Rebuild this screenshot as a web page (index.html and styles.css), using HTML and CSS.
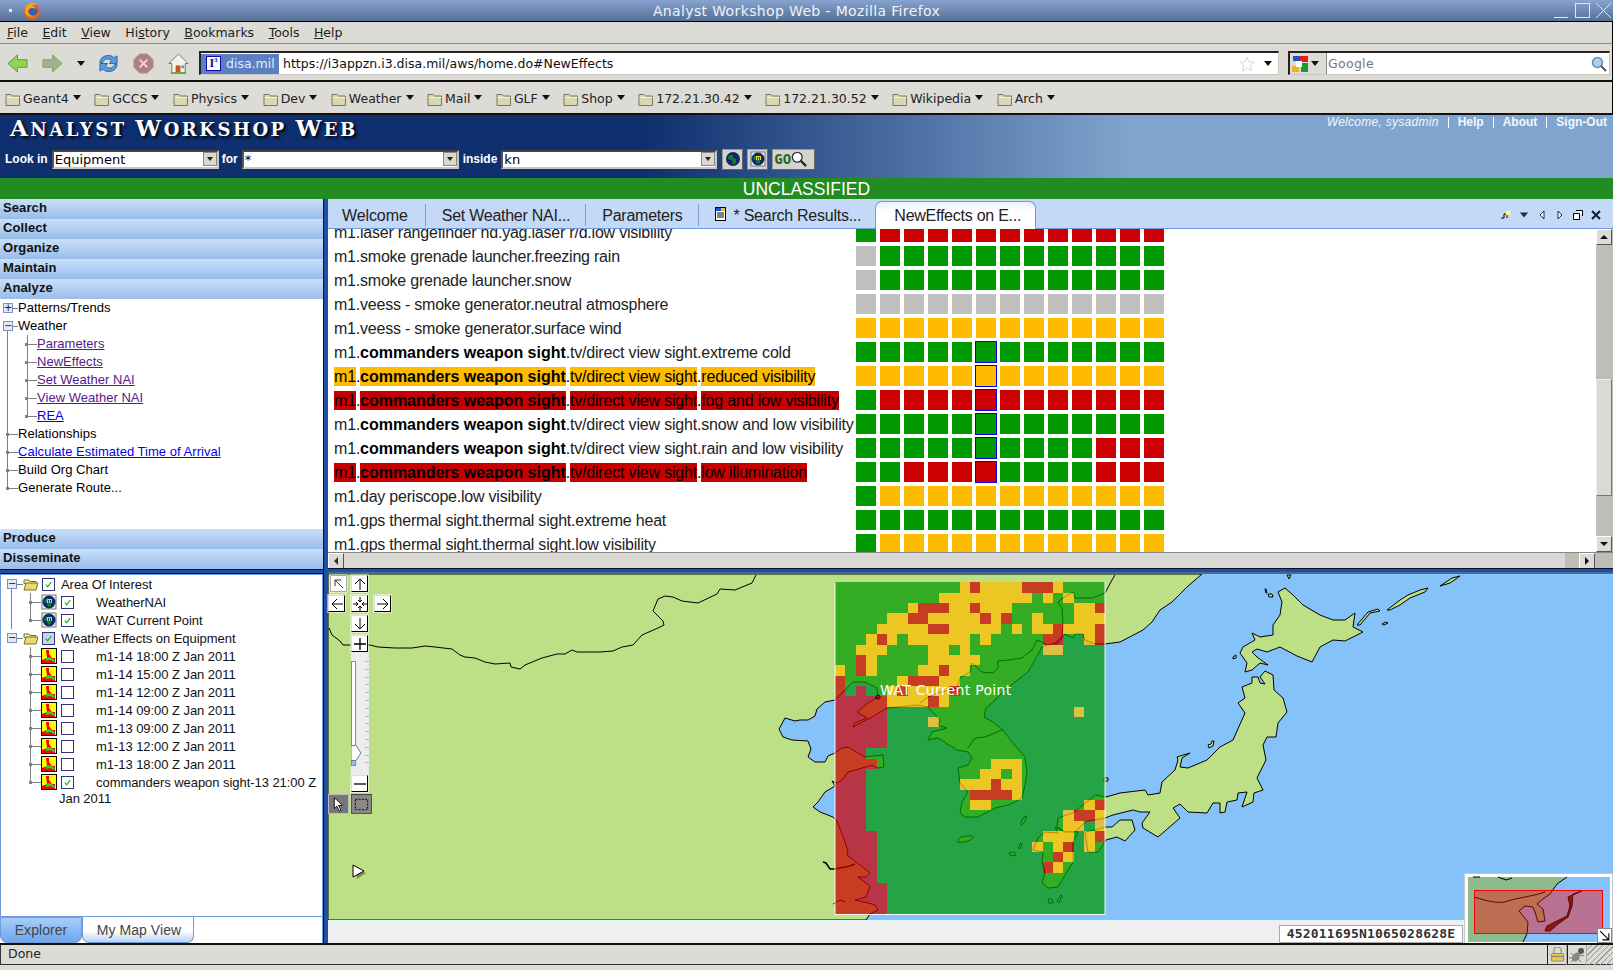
FILE: index.html
```html
<!DOCTYPE html>
<html lang="en">
<head>
<meta charset="utf-8">
<title>Analyst Workshop Web - Mozilla Firefox</title>
<link rel="stylesheet" href="styles.css">
</head>
<body>
<svg class="defs" aria-hidden="true">
  <symbol id="folder" viewBox="0 0 16 16"><path d="M1 3.500h5l1.500 1.500h7v9.500h-13.500z" fill="#d8d8b4" stroke="#77775a"/><path d="M1.500 6.500h13" stroke="#f2f2dc"/></symbol>
  <symbol id="openfolder" viewBox="0 0 16 16"><path d="M1 4h5l1 1.500h6v2h-12z" fill="#f4efa0" stroke="#77771a"/><path d="M1 14l2-7h12l-2 7z" fill="#e8d878" stroke="#77771a"/></symbol>
  <symbol id="layer" viewBox="0 0 16 16"><rect x=".5" y=".5" width="15" height="15" fill="#ff0" stroke="#000"/><path d="M5 2h3v4l3 4h3v5H1v-3l5-2z" fill="#f00"/><path d="M5 10l4-1 5 3-1 2-4-2-4 1z" fill="#2ed12e"/></symbol>
  <symbol id="globe" viewBox="0 0 16 16"><rect x="1" y="1" width="14" height="14" fill="#eee" stroke="#777"/><circle cx="8" cy="8" r="6.500" fill="#0b2a6a"/><path d="M4 5h3v2l3 1v4l-3 1-1-4-3-1z" fill="#1c7a2e"/><path d="M6 5v4h1V6h1v3h1V6h1v3h1V5z" fill="#e4d832"/></symbol>
  <symbol id="check" viewBox="0 0 12 12"><path d="M3 6l2 2.500 4-5" fill="none" stroke="#12b312" stroke-width="1.300"/></symbol>
</svg>

<header class="titlebar">
  <span class="wm-dot"></span>
  <svg class="ffx" viewBox="0 0 18 18"><circle cx="9" cy="9.500" r="8" fill="#e8641a"/><circle cx="10" cy="9" r="4.500" fill="#3a5fa8"/><path d="M3 4c3-4 9-4 12-1-3-1-5 0-6 1 2 0 4 1 4 3-3-2-7-1-8 2 0 3 3 5 6 5-4 2-9-1-9-5 0-2 0-3 1-5z" fill="#f7a51e"/></svg>
  <span class="wintitle">Analyst Workshop Web - Mozilla Firefox</span>
  <span class="winbtns">
    <svg viewBox="0 0 15 15"><path d="M0 14.500h14" stroke="#dfe6f2"/></svg>
    <svg viewBox="0 0 15 15"><rect x=".5" y=".5" width="14" height="14" fill="none" stroke="#dfe6f2"/></svg>
    <svg viewBox="0 0 15 15"><path d="M0 0l15 15M15 0L0 15" stroke="#dfe6f2"/></svg>
  </span>
</header>

<nav class="menubar">
  <span><u>F</u>ile</span><span><u>E</u>dit</span><span><u>V</u>iew</span><span>Hi<u>s</u>tory</span><span><u>B</u>ookmarks</span><span><u>T</u>ools</span><span><u>H</u>elp</span>
</nav>

<div class="navbar">
  <svg class="tool" viewBox="0 0 22 22"><path d="M1 11L11 2v5h10v8H11v5z" fill="#8fd650" stroke="#5aa02c"/></svg>
  <svg class="tool t-fwd" viewBox="0 0 22 22"><path d="M21 11L11 2v5H1v8h10v5z" fill="#9cb48c" stroke="#86a070"/></svg>
  <span class="caret t-drop"></span>
  <svg class="tool t-rel" viewBox="0 0 22 22"><path d="M2 10c0-7 10-10 15-5l3-2v8h-8l2-3c-3-3-8-2-9 2zM20 12c0 7-10 10-15 5l-3 2v-8h8l-2 3c3 3 8 2 9-2z" fill="#5c9ad8" stroke="#2d6aa8"/></svg>
  <svg class="tool t-stop" viewBox="0 0 22 22"><path d="M7 1h8l6 6v8l-6 6H7l-6-6V7z" fill="#b08080" stroke="#979797"/><path d="M7 7l8 8M15 7l-8 8" stroke="#e8d8d8" stroke-width="2"/></svg>
  <svg class="tool t-home" viewBox="0 0 22 22"><path d="M11 1L1 11h3v10h14V11h3z" fill="#f4f2ea" stroke="#77756e"/><path d="M8 13h5v8H8z" fill="#c9551e"/><path d="M14 13h3v3h-3z" fill="#6a92c4"/><path d="M3 21h16" stroke="#6aa84a" stroke-width="2"/></svg>
  <div class="urlbar">
    <span class="identity"><span class="i3">I<sup>3</sup></span><span>disa.mil</span></span>
    <span class="url">https://i3appzn.i3.disa.mil/aws/home.do#NewEffects</span>
    <svg class="star" viewBox="0 0 16 16"><path d="M8 1l2 5h5l-4 3.500 1.500 5.500L8 12l-4.500 3L5 9.500 1 6h5z" fill="#fff" stroke="#d8d8d8"/></svg>
    <span class="caret"></span>
  </div>
  <div class="searchbar">
    <span class="engine">
      <svg class="gicon" viewBox="0 0 16 16"><path d="M1 0h7v5H1z" fill="#1a55c8"/><path d="M8 0h8v6H8z" fill="#e0201a"/><path d="M0 10h7v6H0z" fill="#f0b020"/><path d="M9 7h7v9H9z" fill="#1a9a2e"/><path d="M4 5h6v6H4z" fill="#fff"/></svg>
      <span class="caret"></span>
    </span>
    <span class="gtext">Google</span>
    <svg class="mag" viewBox="0 0 16 16"><circle cx="6.500" cy="6.500" r="5" fill="#a8d0f0" stroke="#6a8aa8" stroke-width="1.500"/><path d="M10 10l5 5" stroke="#555" stroke-width="2"/></svg>
  </div>
</div>

<div class="bookmarks">
  <span class="bm"><svg class="fold"><use href="#folder"/></svg>Geant4<span class="caret"></span></span>
  <span class="bm"><svg class="fold"><use href="#folder"/></svg>GCCS<span class="caret"></span></span>
  <span class="bm"><svg class="fold"><use href="#folder"/></svg>Physics<span class="caret"></span></span>
  <span class="bm"><svg class="fold"><use href="#folder"/></svg>Dev<span class="caret"></span></span>
  <span class="bm"><svg class="fold"><use href="#folder"/></svg>Weather<span class="caret"></span></span>
  <span class="bm"><svg class="fold"><use href="#folder"/></svg>Mail<span class="caret"></span></span>
  <span class="bm"><svg class="fold"><use href="#folder"/></svg>GLF<span class="caret"></span></span>
  <span class="bm"><svg class="fold"><use href="#folder"/></svg>Shop<span class="caret"></span></span>
  <span class="bm"><svg class="fold"><use href="#folder"/></svg>172.21.30.42<span class="caret"></span></span>
  <span class="bm"><svg class="fold"><use href="#folder"/></svg>172.21.30.52<span class="caret"></span></span>
  <span class="bm"><svg class="fold"><use href="#folder"/></svg>Wikipedia<span class="caret"></span></span>
  <span class="bm"><svg class="fold"><use href="#folder"/></svg>Arch<span class="caret"></span></span>
</div>

<section class="apphead">
  <div class="headtop">
    <h1 class="brand"><span>A</span>nalyst <span>W</span>orkshop <span>W</span>eb</h1>
    <div class="userlinks"><em>Welcome, sysadmin</em><i class="pipe"></i><b>Help</b><i class="pipe"></i><b>About</b><i class="pipe"></i><b>Sign-Out</b></div>
  </div>
  <div class="lookin">
    <label>Look in</label><span class="sel sel-a"><span>Equipment</span><i class="selbtn"></i></span>
    <label>for</label><span class="sel sel-b"><span>*</span><i class="selbtn"></i></span>
    <label>inside</label><span class="sel sel-c"><span>kn</span><i class="selbtn"></i></span>
    <span class="hbtn"><svg viewBox="0 0 16 16"><circle cx="8" cy="8" r="7" fill="#0b2a6a"/><path d="M4 4h4v3l3 1v4l-3 2-1-5-4-1z" fill="#1c7a2e"/></svg></span>
    <span class="hbtn"><svg><use href="#globe"/></svg></span>
    <span class="hbtn gobtn"><span>GO</span><svg viewBox="0 0 18 18"><circle cx="7" cy="7" r="5.500" fill="#fff" stroke="#333" stroke-width="1.500"/><path d="M11 11l6 6" stroke="#222" stroke-width="2.500"/></svg></span>
  </div>
</section>

<div class="classbar">UNCLASSIFIED</div>

<main class="workspace">
  <aside class="leftcol">
    <div class="accordion">
      <div class="acc">Search</div>
      <div class="acc">Collect</div>
      <div class="acc">Organize</div>
      <div class="acc">Maintain</div>
      <div class="acc">Analyze</div>
      <div class="navtree">
        <div class="tr t-top"><span class="exp">+</span>Patterns/Trends</div>
        <div class="tr t-open"><span class="exp">&minus;</span>Weather</div>
        <div class="tr t2"><a class="vis">Parameters</a></div>
        <div class="tr t2"><a class="vis">NewEffects</a></div>
        <div class="tr t2"><a class="vis">Set Weather NAI</a></div>
        <div class="tr t2"><a class="vis">View Weather NAI</a></div>
        <div class="tr t2 t2-last"><a class="lnk">REA</a></div>
        <div class="tr t1">Relationships</div>
        <div class="tr t1"><a class="lnk">Calculate Estimated Time of Arrival</a></div>
        <div class="tr t1">Build Org Chart</div>
        <div class="tr t1 t1-last">Generate Route...</div>
      </div>
      <div class="acc">Produce</div>
      <div class="acc">Disseminate</div>
    </div>
    <div class="hsplit"></div>
    <div class="layers">
      <div class="ln l-group l-g1"><span class="exp2">&minus;</span><svg class="ico"><use href="#openfolder"/></svg><span class="cb"><svg><use href="#check"/></svg></span><span class="lt">Area Of Interest</span></div>
      <div class="ln l-item l-i1"><svg class="ico"><use href="#globe"/></svg><span class="cb"><svg><use href="#check"/></svg></span><span class="lt2">WeatherNAI</span></div>
      <div class="ln l-item l-i1 l-i1-last"><svg class="ico"><use href="#globe"/></svg><span class="cb"><svg><use href="#check"/></svg></span><span class="lt2">WAT Current Point</span></div>
      <div class="ln l-group"><span class="exp2">&minus;</span><svg class="ico"><use href="#openfolder"/></svg><span class="cb cb-tint"><svg><use href="#check"/></svg></span><span class="lt">Weather Effects on Equipment</span></div>
      <div class="ln l-item"><svg class="ico"><use href="#layer"/></svg><span class="cb"></span><span class="lt2">m1-14 18:00 Z Jan 2011</span></div>
      <div class="ln l-item"><svg class="ico"><use href="#layer"/></svg><span class="cb"></span><span class="lt2">m1-14 15:00 Z Jan 2011</span></div>
      <div class="ln l-item"><svg class="ico"><use href="#layer"/></svg><span class="cb"></span><span class="lt2">m1-14 12:00 Z Jan 2011</span></div>
      <div class="ln l-item"><svg class="ico"><use href="#layer"/></svg><span class="cb"></span><span class="lt2">m1-14 09:00 Z Jan 2011</span></div>
      <div class="ln l-item"><svg class="ico"><use href="#layer"/></svg><span class="cb"></span><span class="lt2">m1-13 09:00 Z Jan 2011</span></div>
      <div class="ln l-item"><svg class="ico"><use href="#layer"/></svg><span class="cb"></span><span class="lt2">m1-13 12:00 Z Jan 2011</span></div>
      <div class="ln l-item"><svg class="ico"><use href="#layer"/></svg><span class="cb"></span><span class="lt2">m1-13 18:00 Z Jan 2011</span></div>
      <div class="ln l-item l-last"><svg class="ico"><use href="#layer"/></svg><span class="cb"><svg><use href="#check"/></svg></span><span class="lt2">commanders weapon sight-13 21:00 Z</span></div>
      <div class="lwrap">Jan 2011</div>
    </div>
    <div class="lefttabs">
      <span class="ltab ltab-on">Explorer</span>
      <span class="ltab ltab-off">My Map View</span>
    </div>
  </aside>

  <div class="vsplit"></div>

  <div class="rightcol">
    <div class="tabbar">
      <span class="tab tab-first">Welcome</span>
      <span class="tab">Set Weather NAI...</span>
      <span class="tab">Parameters</span>
      <span class="tab tab-ic"><svg viewBox="0 0 11 14"><rect x=".5" y=".5" width="10" height="13" fill="#fff" stroke="#000"/><path d="M1 1h5v3H1z" fill="#1a55c8"/><path d="M6 1h4v3H6z" fill="#f0c020"/><path d="M2 6h7M2 8h7M2 10h7" stroke="#000"/></svg>* Search Results...</span>
      <span class="tab-on">NewEffects on E...</span>
      <span class="tabtools">
        <svg viewBox="0 0 10 10"><path d="M0 8h3V4h3v4" fill="none" stroke="#000"/><rect x="5" y="1" width="4" height="4" fill="#ff6"/></svg>
        <svg viewBox="0 0 12 10"><path d="M1 2h10L6 8z" fill="#222a44"/></svg>
        <svg viewBox="0 0 10 10"><path d="M7 1L3 5l4 4z" fill="#fff" stroke="#222a44"/></svg>
        <svg viewBox="0 0 10 10"><path d="M3 1l4 4-4 4z" fill="#fff" stroke="#222a44"/></svg>
        <svg viewBox="0 0 10 10"><path d="M3 .5h6.500V6M.5 3.500h6v6h-6z" fill="#fff" stroke="#000"/></svg>
        <svg viewBox="0 0 10 10"><path d="M1 1l8 8M9 1L1 9" stroke="#111a33" stroke-width="2"/></svg>
      </span>
    </div>

    <div class="effects">
      <div class="rows">
        <div class="row"><div class="lab">m1.laser rangefinder nd.yag.laser r/d.low visibility</div><div class="cells"><i class="g"></i><i class="r"></i><i class="r"></i><i class="r"></i><i class="r"></i><i class="r"></i><i class="r"></i><i class="r"></i><i class="r"></i><i class="r"></i><i class="r"></i><i class="r"></i><i class="r"></i></div></div>
        <div class="row"><div class="lab">m1.smoke grenade launcher.freezing rain</div><div class="cells"><i class="n"></i><i class="g"></i><i class="g"></i><i class="g"></i><i class="g"></i><i class="g"></i><i class="g"></i><i class="g"></i><i class="g"></i><i class="g"></i><i class="g"></i><i class="g"></i><i class="g"></i></div></div>
        <div class="row"><div class="lab">m1.smoke grenade launcher.snow</div><div class="cells"><i class="n"></i><i class="g"></i><i class="g"></i><i class="g"></i><i class="g"></i><i class="g"></i><i class="g"></i><i class="g"></i><i class="g"></i><i class="g"></i><i class="g"></i><i class="g"></i><i class="g"></i></div></div>
        <div class="row"><div class="lab">m1.veess - smoke generator.neutral atmosphere</div><div class="cells"><i class="n"></i><i class="n"></i><i class="n"></i><i class="n"></i><i class="n"></i><i class="n"></i><i class="n"></i><i class="n"></i><i class="n"></i><i class="n"></i><i class="n"></i><i class="n"></i><i class="n"></i></div></div>
        <div class="row"><div class="lab">m1.veess - smoke generator.surface wind</div><div class="cells"><i class="o"></i><i class="o"></i><i class="o"></i><i class="o"></i><i class="o"></i><i class="o"></i><i class="o"></i><i class="o"></i><i class="o"></i><i class="o"></i><i class="o"></i><i class="o"></i><i class="o"></i></div></div>
        <div class="row"><div class="lab"><span>m1</span>.<b>commanders weapon sight</b>.<span>tv/direct view sight</span>.<span>extreme cold</span></div><div class="cells"><i class="g"></i><i class="g"></i><i class="g"></i><i class="g"></i><i class="g"></i><i class="g s"></i><i class="g"></i><i class="g"></i><i class="g"></i><i class="g"></i><i class="g"></i><i class="g"></i><i class="g"></i></div></div>
        <div class="row hl-o"><div class="lab"><span>m1</span>.<b>commanders weapon sight</b>.<span>tv/direct view sight</span>.<span>reduced visibility</span></div><div class="cells"><i class="o"></i><i class="o"></i><i class="o"></i><i class="o"></i><i class="o"></i><i class="o s"></i><i class="o"></i><i class="o"></i><i class="o"></i><i class="o"></i><i class="o"></i><i class="o"></i><i class="o"></i></div></div>
        <div class="row hl-r"><div class="lab"><span>m1</span>.<b>commanders weapon sight</b>.<span>tv/direct view sight</span>.<span>fog and low visibility</span></div><div class="cells"><i class="g"></i><i class="r"></i><i class="r"></i><i class="r"></i><i class="r"></i><i class="r s"></i><i class="r"></i><i class="r"></i><i class="r"></i><i class="r"></i><i class="r"></i><i class="r"></i><i class="r"></i></div></div>
        <div class="row"><div class="lab"><span>m1</span>.<b>commanders weapon sight</b>.<span>tv/direct view sight</span>.<span>snow and low visibility</span></div><div class="cells"><i class="g"></i><i class="g"></i><i class="g"></i><i class="g"></i><i class="g"></i><i class="g s"></i><i class="g"></i><i class="g"></i><i class="g"></i><i class="g"></i><i class="g"></i><i class="g"></i><i class="g"></i></div></div>
        <div class="row"><div class="lab"><span>m1</span>.<b>commanders weapon sight</b>.<span>tv/direct view sight</span>.<span>rain and low visibility</span></div><div class="cells"><i class="g"></i><i class="g"></i><i class="g"></i><i class="g"></i><i class="g"></i><i class="g s"></i><i class="g"></i><i class="g"></i><i class="g"></i><i class="g"></i><i class="r"></i><i class="r"></i><i class="r"></i></div></div>
        <div class="row hl-r"><div class="lab"><span>m1</span>.<b>commanders weapon sight</b>.<span>tv/direct view sight</span>.<span>low illumination</span></div><div class="cells"><i class="g"></i><i class="g"></i><i class="r"></i><i class="r"></i><i class="r"></i><i class="r s"></i><i class="g"></i><i class="g"></i><i class="g"></i><i class="g"></i><i class="r"></i><i class="r"></i><i class="r"></i></div></div>
        <div class="row"><div class="lab">m1.day periscope.low visibility</div><div class="cells"><i class="g"></i><i class="o"></i><i class="o"></i><i class="o"></i><i class="o"></i><i class="o"></i><i class="o"></i><i class="o"></i><i class="o"></i><i class="o"></i><i class="o"></i><i class="o"></i><i class="o"></i></div></div>
        <div class="row"><div class="lab">m1.gps thermal sight.thermal sight.extreme heat</div><div class="cells"><i class="g"></i><i class="g"></i><i class="g"></i><i class="g"></i><i class="g"></i><i class="g"></i><i class="g"></i><i class="g"></i><i class="g"></i><i class="g"></i><i class="g"></i><i class="g"></i><i class="g"></i></div></div>
        <div class="row"><div class="lab">m1.gps thermal sight.thermal sight.low visibility</div><div class="cells"><i class="g"></i><i class="o"></i><i class="o"></i><i class="o"></i><i class="o"></i><i class="o"></i><i class="o"></i><i class="o"></i><i class="o"></i><i class="o"></i><i class="o"></i><i class="o"></i><i class="o"></i></div></div>
      </div>
      <div class="vscroll">
        <span class="sbtn"><i class="up"></i></span>
        <span class="vtrack"><span class="vthumb"></span></span>
        <span class="sbtn"><i class="down"></i></span>
      </div>
    </div>

    <div class="hscroll">
      <span class="sbtn"><i class="left"></i></span>
      <span class="hthumb"></span>
      <span class="htrack"></span>
      <span class="sbtn"><i class="right"></i></span>
    </div>

    <div class="hsplit2"></div>

    <div class="mapwrap">
      <svg class="map" viewBox="328 574 1285 346" width="1285" height="346">
        <rect x="328" y="574" width="1285" height="346" fill="#85c2f9"/>
        <g fill="#bddf85" stroke="#000" stroke-width="1" stroke-linejoin="round">
          <path d="M1202 574L1187 587 1172 602 1160 610 1152 622 1143 630 1120 642 1105 644 1095 644 1085 640 1083 634 1075 634 1073 638 1065 634 1058 643 1047 645 1042 647 1032 665 1028 672 1015 682 1005 690 992 703 986 708 984 717 993 722 1003 730 1012 742 1025 757 1027 772 1025 785 1022 798 1015 802 1008 805 995 808 978 817 965 817 960 813 962 802 968 792 960 783 958 768 968 765 972 758 968 752 957 750 938 738 928 740 932 732 947 728 938 725 940 720 928 707 918 705 898 707 887 708 872 717 853 727 855 723 867 718 857 712 868 703 878 697 877 688 865 682 853 682 845 690 835 700 825 702 817 709 815 716 808 720 800 720 795 721 785 718 779 729 783 737 792 740 808 741 811 749 808 757 815 762 825 762 828 756 835 753 842 748 848 747 858 753 865 757 883 755 884 767 877 768 872 765 862 768 848 772 842 780 837 783 832 781 835 786 825 792 818 802 813 807 820 812 833 817 837 821 845 842 848 852 847 855 860 865 870 873 866 877 858 877 870 886 866 897 855 900 868 903 875 905 878 910 870 914 866 920 328 920 328 574z"/>
          <path d="M1278 592L1285 588 1293 595 1303 605 1320 615 1333 620 1345 620 1355 613 1353 627 1363 632 1353 637 1345 641 1333 640 1320 647 1312 662 1297 656 1280 647 1267 652 1257 649 1252 652 1257 657 1268 665 1260 663 1252 670 1245 672 1247 663 1240 653 1243 647 1255 640 1252 633 1260 637 1273 635 1273 625 1280 615 1282 602z"/>
          <path d="M1252 677L1258 677 1260 683 1265 684 1260 677 1265 671 1273 675 1274 690 1283 698 1287 712 1278 723 1276 737 1267 737 1263 745 1266 760 1257 778 1263 790 1254 793 1253 802 1242 807 1247 792 1238 793 1237 800 1227 802 1225 812 1220 813 1220 803 1213 803 1207 813 1188 812 1180 804 1173 808 1180 818 1158 837 1143 828 1142 823 1150 812 1140 812 1133 810 1113 815 1105 818 1093 820 1085 822 1075 832 1065 832 1057 827 1058 818 1073 813 1083 805 1095 795 1106 797 1120 793 1145 790 1148 795 1160 793 1162 782 1175 770 1178 760 1177 757 1190 753 1182 758 1180 767 1188 768 1207 760 1220 747 1233 740 1245 713 1238 703 1245 698 1242 687 1252 683z"/>
          <path d="M1085 832L1095 830 1106 827 1112 827 1120 820 1132 820 1135 830 1125 841 1117 837 1106 840 1098 852 1088 852z"/>
          <path d="M1055 827L1058 833 1045 832 1038 838 1033 850 1043 852 1042 862 1045 872 1042 883 1048 888 1058 887 1065 875 1073 862 1073 842 1078 832 1065 832z"/>
          <path d="M958 839c3-3 12-4 15-2 1 3-10 6-15 5z"/>
          <path d="M1021 822l3-5 3-1-3 7-3 2z"/>
          <path d="M1009 853l5-1 2 3-5 1zM1018 848l3-5 1 1-2 5zM1048 899l4 0 1 4-4 0zM1057 901l4-6 1 1-3 7z"/>
          <path d="M1440 586L1452 578 1460 576 1450 583z"/>
          <path d="M1387 610L1400 600 1408 595 1420 590 1428 588 1425 592 1410 598 1400 605 1390 610zM1357 625L1368 612 1378 609 1380 611 1370 613 1360 625zM1382 624l4-2 2 1-4 2zM1268 594l4 0 1 3-4 0zM1265 589l1 0 1 4-1 0zM1287 575l4 0-2 4zM1233 657l3-2 0 3-3 1zM1208 745l3-1 1-3 2 0-1 5-4 2zM1104 778l4 0 0 3-4 0z"/>
        </g>
        <g fill="none" stroke="#000" stroke-width="1">
          <path d="M329 628L332 635 340 641 343 645 349 645 370 645 378 647 395 648 412 648 425 646 435 647 452 649 460 655 465 657 475 658 485 662 495 664 510 663 511 667 520 669 525 665 542 658 557 654 565 654 572 650 577 652 600 652 613 651 622 647 633 645 642 635 658 628 664 625 663 621 653 611 658 599 665 596 673 597 682 601 698 603 717 594 720 589 735 590 752 583 756 575"/>
          <path d="M1047 645L1042 642 1037 640 1032 650 1022 658 1008 660 998 661 998 668 993 673 982 672 972 663 970 672 960 678 957 688 938 693 928 697 920 703"/>
          <path d="M968 748L975 738 985 737 1002 730"/>
          <path d="M1055 643L1062 637 1063 625 1062 608 1058 602 1063 598 1073 592 1075 598 1092 598 1105 593 1112 580 1115 575"/>
          <path d="M823 862L826 863 830 869 835 869 850 866 855 864" stroke-width="1.500"/>
          <path d="M833 904L840 900 845 902"/>
        </g>
        <g class="overlay" transform="translate(835 582.300) scale(10.385 10.370)" opacity=".72" shape-rendering="crispEdges">
          <rect width="26" height="32" fill="#090"/>
          <path fill="#ffbf00" d="M12 0h1v1h-1zM14 0h4v1h-4zM21 0h1v1h-1zM10 1h9v1h-9zM20 1h1v1h-1zM22 1h1v1h-1zM7 2h1v1H7zM11 2h2v1h-2zM14 2h3v1h-3zM23 2h2v1h-2zM5 3h2v1H5zM9 3h5v1H9zM15 3h1v1h-1zM19 3h1v1h-1zM23 3h3v1h-3zM4 4h5v1H4zM11 4h5v1h-5zM17 4h1v1h-1zM19 4h2v1h-2zM22 4h3v1h-3zM3 5h1v1H3zM5 5h1v1H5zM7 5h6v1H7zM14 5h1v1h-1zM24 5h1v1h-1zM2 6h3v1H2zM9 6h2v1H9zM12 6h1v1h-1zM20 6h2v1h-2zM3 7h1v1H3zM9 7h5v1H9zM0 8h1v1H0zM3 8h1v1H3zM8 8h2v1H8zM11 8h2v1h-2zM6 9h1v1H6zM10 9h2v1h-2zM5 10h1v1H5zM7 10h4v1H7zM5 11h4v1H5zM10 11h1v1h-1zM23 12h1v1h-1zM9 13h1v1H9zM15 17h3v1h-3zM14 18h2v1h-2zM17 18h1v1h-1zM12 19h3v1h-3zM16 19h2v1h-2zM17 20h1v1h-1zM13 21h2v1h-2zM24 21h1v1h-1zM22 22h1v1h-1zM25 22h1v1h-1zM22 23h2v1h-2zM25 23h1v1h-1zM20 24h3v1h-3zM24 24h1v1h-1zM19 25h1v1h-1zM21 25h1v1h-1zM24 25h1v1h-1zM22 26h1v1h-1zM21 27h1v1h-1z"/>
          <path fill="#c00" d="M13 0h1v1h-1zM18 0h3v1h-3zM8 2h3v1H8zM13 2h1v1h-1zM25 2h1v1h-1zM7 3h2v1H7zM14 3h1v1h-1zM16 3h1v1h-1zM9 4h2v1H9zM21 4h1v1h-1zM25 4h1v1h-1zM4 5h1v1H4zM20 5h2v1h-2zM25 5h1v1h-1zM2 7h1v1H2zM2 8h1v1H2zM10 8h1v1h-1zM0 9h1v1H0zM7 9h3v1H7zM0 10h1v1H0zM2 10h1v1H2zM6 10h1v1H6zM11 10h1v1h-1zM0 11h5v1H0zM9 11h1v1H9zM0 12h5v4H0zM0 16h3v1H0zM0 17h4v1H0zM0 18h3v6H0zM15 19h1v1h-1zM13 20h4v1h-4zM25 21h1v1h-1zM23 22h2v1h-2zM0 24h4v5H0zM25 24h1v1h-1zM22 25h1v1h-1zM21 26h1v1h-1zM20 27h1v1h-1zM0 29h5v3H0z"/>
        </g>
        <path d="M835 582.500V914.500H1105V582" fill="none" stroke="#fff" stroke-opacity=".9"/>
        <circle cx="878" cy="697" r="2" fill="none" stroke="#000"/>
        <text class="maplabel" x="880" y="695">WAT Current Point</text>
        <path d="M354 865l11 6-9 6z" fill="#4a5a2a" transform="translate(1 2)" opacity=".6"/>
        <path d="M353 865l11 6-11 6z" fill="#fff" stroke="#000"/>
      </svg>

      <div class="mapctl">
        <span class="mb mb-nw"><svg viewBox="0 0 14 14"><path d="M3 3h6M3 3v6M3 3l8 8" fill="none" stroke="#333"/></svg></span>
        <span class="mb"><svg viewBox="0 0 14 14"><path d="M7 13V2M2 7l5-5 5 5" fill="none" stroke="#000"/></svg></span>
        <span></span>
        <span class="mb"><svg viewBox="0 0 14 14"><path d="M13 7H2M7 2L2 7l5 5" fill="none" stroke="#000"/></svg></span>
        <span class="mb"><svg viewBox="0 0 14 14"><path d="M7 0v5M5 3l2 2 2-2M7 14V9M5 11l2-2 2 2M0 7h5M3 5l2 2-2 2M14 7H9M11 5L9 7l2 2" fill="none" stroke="#000"/></svg></span>
        <span class="mb"><svg viewBox="0 0 14 14"><path d="M1 7h11M7 2l5 5-5 5" fill="none" stroke="#000"/></svg></span>
        <span></span>
        <span class="mb"><svg viewBox="0 0 14 14"><path d="M7 1v11M2 7l5 5 5-5" fill="none" stroke="#000"/></svg></span>
        <span></span>
        <span></span>
        <span class="mb"><svg viewBox="0 0 14 14"><path d="M7 1v12M1 7h12" fill="none" stroke="#000" stroke-width="1.300"/></svg></span>
        <span></span>
        <span></span>
        <span class="zoomrail"><span class="ztrack"><span class="zfill"></span></span><svg class="zthumb" viewBox="0 0 11 16"><path d="M0 .5h5l5 7.500-5 7.500H0z" fill="#fff" stroke="#6a7a9a"/></svg><span class="zticks"></span></span>
        <span></span>
        <span></span>
        <span class="mb"><svg viewBox="0 0 14 14"><path d="M1 7h12" fill="none" stroke="#000" stroke-width="1.300"/></svg></span>
        <span></span>
        <span class="tb tb-a"><svg viewBox="0 0 14 18"><path d="M2 1v13l3-3 3 6 2-1-3-6h5z" fill="#fff" stroke="#000"/></svg></span>
        <span class="tb"><svg viewBox="0 0 16 14"><rect x="1.500" y="1.500" width="13" height="11" fill="none" stroke="#000" stroke-dasharray="2 1.500"/></svg></span>
      </div>

      <div class="coordstrip"><span class="coord">452011695N1065028628E</span></div>

      <div class="mini">
        <svg viewBox="1465 875 147 68" width="147" height="68">
          <rect x="1468" y="878" width="142" height="65" fill="#85c2f9"/>
          <path d="M1468 878H1567L1557 885 1550 895 1543 900 1537 905 1543 910 1545 922 1538 923 1535 913 1533 908 1525 907 1519 912 1528 923 1527 935 1523 943H1468z" fill="#8dbb8c"/>
          <path d="M1567 878L1557 885 1550 895 1543 900 1537 905 1543 910 1545 922 1538 923 1535 913 1533 908 1525 907 1519 912 1528 923 1527 935 1523 943" fill="none" stroke="#000"/>
          <path d="M1573 895L1582 892 1568 898 1570 907 1567 917 1557 922 1547 927 1545 932 1550 932 1558 925 1568 918 1572 907z" fill="#3a2a20" stroke="#000"/>
          <path d="M1474 898C1490 903 1500 905 1508 902S1530 898 1545 893M1473 878H1480M1498 878L1506 881 1512 879" stroke="#000" fill="none"/>
          <rect x="1474.500" y="891.500" width="128" height="43" fill="#f00" fill-opacity=".41" stroke="#f00"/>
        </svg>
        <span class="minibtn"><svg viewBox="0 0 12 12"><path d="M2 2l8 8M10 4v6H4" fill="none" stroke="#000"/></svg></span>
      </div>
    </div>
  </div>
</main>

<footer class="statusbar">
  <div class="statusline">
    <span class="done">Done</span>
    <span class="st-ic"><svg viewBox="0 0 16 16"><path d="M4 7V4a4 4 0 0 1 8 0v3" fill="none" stroke="#999" stroke-width="1.500"/><rect x="1.500" y="7" width="13" height="8" rx="1" fill="#e6c84a" stroke="#888"/><path d="M2 10h12" stroke="#777"/></svg></span>
    <span class="st-ic st-bug"><svg viewBox="0 0 18 16"><ellipse cx="8" cy="10" rx="3.500" ry="5" fill="#888" transform="rotate(35 8 10)"/><circle cx="13" cy="4" r="3" fill="#555"/><path d="M3 6l3 3M1 11l4 0M3 15l3-3M10 12l3 3M12 8l4 1" stroke="#777"/></svg></span>
    <span class="grip"></span>
  </div>
  <div class="taskstrip"></div>
</footer>
</body>
</html>
```

FILE: styles.css
```css
* { box-sizing: border-box; }
html, body { margin: 0; padding: 0; }
body { width: 1613px; height: 970px; overflow: hidden; display: flex; flex-direction: column; font-family: "Liberation Sans", Arial, sans-serif; background: #dcdbd6; }
.defs { width: 0; height: 0; position: absolute; }
svg { display: block; flex: none; }
u { text-decoration: underline; }

/* window title */
.titlebar { height: 21px; flex: none; background: linear-gradient(#87a3cf, #566f93); display: flex; align-items: center; justify-content: center; padding-right: 20px; position: relative; color: #eef2f8; font: 14px "DejaVu Sans", sans-serif; letter-spacing: .36px; }
.wm-dot { position: absolute; left: 9px; top: 9px; width: 3px; height: 3px; background: #e8eef6; }
.ffx { position: absolute; left: 23px; top: 2px; width: 18px; height: 18px; }
.winbtns { position: absolute; right: 2px; top: 3px; display: flex; gap: 6px; }
.winbtns svg { width: 15px; height: 15px; }

/* browser bars */
.menubar { height: 23px; flex: none; border-top: 1px solid #000; border-bottom: 1px solid #8a8983; border-right: 1px solid #000; display: flex; align-items: center; padding-left: 7px; gap: 14.500px; font: 12.500px "DejaVu Sans", sans-serif; color: #222; background: #dcdbd6; }
.navbar { height: 38px; flex: none; border-bottom: 2px solid #111; border-right: 1px solid #000; display: flex; align-items: center; padding: 2px 0 0 7px; background: #dcdbd6; }
.tool { width: 21px; height: 21px; }
.t-fwd { margin-left: 14px; }
.t-drop { margin: 0 13px 0 14px; }
.t-stop { margin-left: 14px; }
.t-home { margin-left: 14px; margin-right: 10px; }
.caret { display: inline-block; flex: none; width: 0; height: 0; border-left: 4.500px solid transparent; border-right: 4.500px solid transparent; border-top: 5px solid #111; }
.urlbar { width: 1080px; height: 24px; flex: none; background: #fff; border: 1px solid #c9c8c2; border-top: 2px solid #222; border-left: 2px solid #222; display: flex; align-items: center; font: 12.500px "DejaVu Sans", sans-serif; color: #111; padding-right: 6px; }
.identity { width: 78px; height: 20px; background: #5b7fc0; color: #e4ebf6; display: flex; align-items: center; gap: 5px; padding-left: 5px; flex: none; }
.i3 { width: 15px; height: 15px; background: #fff; border: 1px solid #0a0aa8; color: #0a0aa8; font: bold 12px/13px "Liberation Serif", serif; text-align: center; flex: none; }
.i3 sup { font-size: 7px; line-height: 0; }
.url { margin-left: 4px; flex: 1; }
.star { width: 16px; height: 16px; margin-right: 9px; }
.searchbar { width: 322px; height: 24px; margin-left: 9px; flex: none; background: #fff; border: 1px solid #c9c8c2; border-top: 2px solid #222; border-left: 2px solid #222; display: flex; align-items: center; font: 12.500px "DejaVu Sans", sans-serif; color: #777; }
.engine { width: 37px; height: 21px; background: #dcdbd6; border-right: 1px solid #8a8983; display: flex; align-items: center; gap: 3px; padding-left: 2px; flex: none; }
.gicon { width: 16px; height: 16px; }
.gtext { margin-left: 1px; flex: 1; letter-spacing: .3px; }
.mag { width: 16px; height: 16px; margin-right: 2px; }
.bookmarks { height: 33px; flex: none; border-bottom: 2px solid #111; border-right: 1px solid #000; display: flex; align-items: center; padding: 2px 0 0 5px; gap: 13.500px; font: 12.500px "DejaVu Sans", sans-serif; color: #222; background: #dcdbd6; }
.bm { display: flex; align-items: center; gap: 2px; }
.fold { width: 16px; height: 16px; }
.bm .caret { margin-left: 2px; margin-top: -2px; }

/* application header */
.apphead { height: 63px; flex: none; background: linear-gradient(90deg, #0f2f6e 0, #0f2f6e 40%, #7fa5ce 70%, #7fa5ce 100%); display: flex; flex-direction: column; color: #fff; }
.headtop { height: 29px; display: flex; justify-content: space-between; padding: 0 6px 0 10px; }
.brand { margin: 0; font: bold 18px/25px "DejaVu Serif", serif; text-transform: uppercase; color: #fff; letter-spacing: 2.500px; text-shadow: 2px 2px 3px #000; white-space: nowrap; }
.brand span { font-size: 23px; }
.userlinks { display: flex; align-items: center; gap: 9px; height: 14px; font-size: 12px; color: #f2f6fb; }
.userlinks em { letter-spacing: .28px; }
.pipe { width: 1px; height: 11px; background: #fff; }
.lookin { display: flex; align-items: center; height: 22px; padding-left: 5px; margin-top: 4px; }
.lookin label { font: bold 12px "Liberation Sans", sans-serif; color: #fff; }
.sel { height: 19px; background: #fff; border: 2px solid #c8c7c0; border-top-color: #444; border-left-color: #555; display: flex; align-items: center; justify-content: space-between; color: #000; font: 13px "DejaVu Sans", sans-serif; padding-left: 1px; }
.sel-a { width: 167px; margin: 0 3px 0 4px; }
.sel-b { width: 217px; margin: 0 4px 0 4px; }
.sel-c { width: 216px; margin: 0 5px 0 4px; }
.selbtn { width: 14px; height: 14px; background: #d8d7d0; border: 1px solid #888; display: flex; align-items: center; justify-content: center; }
.selbtn::after { content: ""; width: 0; height: 0; border-left: 3.500px solid transparent; border-right: 3.500px solid transparent; border-top: 4px solid #222; }
.hbtn { width: 21px; height: 21px; background: #d4d3cc; border: 1px solid #9a9990; border-right-color: #666; border-bottom-color: #666; display: flex; align-items: center; justify-content: center; margin-right: 4px; }
.hbtn svg { width: 16px; height: 16px; }
.gobtn { width: 43px; font: bold 14px "DejaVu Sans Mono", monospace; color: #1c6a2a; gap: 0; justify-content: flex-start; padding-left: 1px; }

.classbar { height: 21px; flex: none; background: #228b22; color: #fff; text-align: center; font-size: 17.500px; line-height: 23px; }

/* work area */
.workspace { height: 744px; flex: none; display: grid; grid-template-columns: 323px 5px 1285px; background: #fff; }
.leftcol { display: flex; flex-direction: column; min-width: 0; }
.accordion { height: 370px; flex: none; display: flex; flex-direction: column; }
.acc { height: 20px; flex: none; background: linear-gradient(#c9e0fa, #99bce9); font: bold 13px/18px "Liberation Sans", sans-serif; padding-left: 3px; color: #111; letter-spacing: .1px; }
.navtree { flex: 1; background: #fff; }
.tr { height: 18px; display: flex; align-items: center; padding-bottom: 2px; font-size: 13px; letter-spacing: .03px; color: #000; white-space: nowrap;
  --ln: linear-gradient(#808080, #808080); background-repeat: no-repeat; }
.exp { width: 10px; height: 10px; border: 1px solid #7b93bb; background: #e4e9f2; font: 10px/8px "DejaVu Sans", sans-serif; text-align: center; margin: 2px 5px 0 3px; flex: none; color: #222; }
.t-top { background-image: var(--ln); background-size: 5px 1px; background-position: 13px 9px; }
.t-open { background-image: var(--ln), var(--ln); background-size: 5px 1px, 1px 5px; background-position: 13px 9px, 7px 13px; }
.t1 { padding-left: 18px; background-image: var(--ln), var(--ln), var(--ln); background-size: 1px 18px, 11px 1px, 3px 3px; background-position: 7px 0, 7px 9px, 6px 8px; }
.t1-last { background-size: 1px 9px, 11px 1px, 3px 3px; }
.t2 { padding-left: 37px; background-image: var(--ln), var(--ln), var(--ln), var(--ln); background-size: 1px 18px, 1px 18px, 10px 1px, 3px 3px; background-position: 7px 0, 27px 0, 27px 9px, 25px 8px; }
.t2-last { background-size: 1px 18px, 1px 9px, 10px 1px, 3px 3px; }
.vis { color: #551a8b; text-decoration: underline; }
.lnk { color: #0000ee; text-decoration: underline; }

.hsplit { height: 5px; flex: none; background: #1f4fa3; border-top: 1px solid #06122e; border-bottom: 1px solid #06122e; }
.layers { height: 343px; flex: none; background: #fff; border: 1px solid #6f9bd8; }
.ln { height: 18px; display: flex; align-items: center; font-size: 13px; letter-spacing: -.05px; color: #111; white-space: nowrap; --ln: linear-gradient(#808080, #808080); background-repeat: no-repeat; }
.exp2 { width: 10px; height: 10px; border: 1px solid #7b93bb; background: #e4e9f2; font: 10px/8px "DejaVu Sans", sans-serif; text-align: center; margin-left: 6px; flex: none; }
.ico { width: 16px; height: 16px; }
.l-group { background-image: var(--ln); background-size: 7px 1px; background-position: 15px 9px; }
.l-group .ico { margin-left: 6px; }
.l-g1 { background-image: var(--ln), var(--ln); background-size: 7px 1px, 1px 5px; background-position: 15px 9px, 10px 13px; }
.l-group .cb { margin-left: 3px; }
.cb { width: 13px; height: 13px; border: 1px solid #33337a; background: #fff; flex: none; }
.cb svg { width: 11px; height: 11px; }
.cb-tint { background: #c9d3ef; }
.lt { margin-left: 6px; }
.l-item { padding-left: 40px; background-image: var(--ln), var(--ln), var(--ln); background-size: 1px 18px, 11px 1px, 3px 3px; background-position: 29px 0, 29px 9px, 28px 8px; }
.l-i1 { background-image: var(--ln), var(--ln), var(--ln), var(--ln); background-size: 1px 18px, 1px 18px, 11px 1px, 3px 3px; background-position: 10px 0, 29px 0, 29px 9px, 28px 8px; }
.l-i1-last { background-size: 1px 18px, 1px 9px, 11px 1px, 3px 3px; }
.l-last { background-size: 1px 9px, 11px 1px, 3px 3px; }
.l-item .cb { margin-left: 4px; }
.lt2 { margin-left: 22px; }
.lwrap { height: 18px; padding-left: 58px; font-size: 13px; letter-spacing: -.05px; line-height: 15px; color: #111; }
.lefttabs { flex: 1; background: #fff; display: flex; align-items: flex-end; font-size: 14px; letter-spacing: .05px; color: #444; border-right: 1px solid #6f9bd8; }
.ltab { height: 26px; display: flex; align-items: center; justify-content: center; }
.ltab-on { width: 82px; background: linear-gradient(#a8cdfb, #6fa6ee); border: 1px solid #6f9bd8; border-radius: 0 0 7px 7px; }
.ltab-off { width: 112px; background: linear-gradient(#fff 55%, #bcd3f2); border: 1px solid #6f9bd8; border-top: 0; border-radius: 0 0 7px 7px; padding-left: 2px; }
.vsplit { background: #1f4fa3; border-left: 1px solid #06122e; }

.rightcol { display: flex; flex-direction: column; min-width: 0; position: relative; }
.tabbar { height: 30px; flex: none; background: #c3d9f7; border-bottom: 1px solid #6f9bd8; display: flex; align-items: flex-end; font-size: 16px; color: #222; }
.tab { height: 22px; margin-bottom: 2px; padding: 2px 15px 0 16px; border-right: 1px solid #7a9fd0; display: flex; align-items: center; white-space: nowrap; letter-spacing: -.25px; }
.tab-first { padding-left: 14px; padding-right: 17px; letter-spacing: -.1px; }
.tab-ic { border-right: 0; gap: 8px; padding-right: 14px; }
.tab-ic svg { width: 11px; height: 14px; margin-top: -4px; }
.tab-on { width: 161px; height: 28px; margin-bottom: -1px; padding: 1px 0 0 4px; background: linear-gradient(#eaf2fd, #fff 40%); border: 1px solid #6f9bd8; border-bottom: 0; border-radius: 7px 7px 0 0; display: flex; align-items: center; justify-content: center; white-space: nowrap; letter-spacing: -.25px; }
.tabtools { margin-left: auto; display: flex; align-items: center; gap: 8px; height: 26px; padding-right: 12px; }
.tabtools svg { width: 10px; height: 10px; }

.effects { height: 323px; flex: none; display: flex; overflow: hidden; background: #fff; }
.rows { flex: 1; margin-top: -7px; padding-left: 6px; min-width: 0; }
.row { height: 24px; display: flex; }
.lab { width: 522px; height: 20px; line-height: 20px; padding-top: 1px; font-size: 16px; letter-spacing: -.22px; white-space: nowrap; color: #222; flex: none; }
.lab span { letter-spacing: -.18px; display: inline-block; height: 19px; line-height: 19px; vertical-align: top; }
.lab b { color: #000; letter-spacing: -.03px; display: inline-block; height: 19px; line-height: 19px; vertical-align: top; }
.hl-o .lab { color: #000; }
.hl-o .lab span, .hl-o .lab b { background: #ffbb00; }
.hl-r .lab { color: #000; }
.hl-r .lab span, .hl-r .lab b { background: #c60000; }
.cells { display: grid; grid-template-columns: repeat(13, 20px); gap: 4px; }
.cells i { display: block; width: 20px; height: 20px; }
.g { background: #090; }
.r { background: #c00; }
.o { background: #fb0; }
.n { background: #c0c0c0; }
.cells .s { box-shadow: 0 0 0 1px #00f; }
.vscroll { width: 17px; flex: none; display: flex; flex-direction: column; background: #bfbeb6; padding-right: 1px; }
.sbtn { width: 16px; height: 16px; flex: none; background: #dcdbd6; border: 1px solid #555; border-top-color: #fff; border-left-color: #fff; display: flex; align-items: center; justify-content: center; }
.sbtn i { width: 0; height: 0; border: 4px solid transparent; }
.up { border-bottom-color: #111 !important; margin-top: -4px; }
.down { border-top-color: #111 !important; margin-top: 4px; }
.left { border-right-color: #333 !important; margin-left: -4px; }
.right { border-left-color: #111 !important; margin-left: 4px; }
.vtrack { flex: 1; padding-top: 134px; }
.vthumb { display: block; height: 117px; background: #dad9d4; border: 1px solid #777; border-top-color: #eee; border-left-color: #eee; }
.hscroll { height: 16px; flex: none; display: flex; background: #bfbeb6; border-top: 1px solid #888; padding-right: 18px; }
.hthumb { width: 1221px; background: #dad9d4; }
.htrack { flex: 1; }
.hsplit2 { height: 6px; flex: none; background: #1f4fa3; border-top: 1px solid #06122e; border-bottom: 2px solid #4a6a94; }

.mapwrap { flex: 1; position: relative; display: flex; flex-direction: column; min-height: 0; }
.map { flex: none; }
.maplabel { font: 14px "DejaVu Sans", sans-serif; fill: #fff; letter-spacing: .3px; }
.coordstrip { flex: 1; background: #efefef; border-top: 1px solid #d8f6f8; display: flex; padding-left: 951px; padding-top: 4px; }
.coord { width: 184px; height: 18px; background: #fff; border: 1px solid #aaa; font: bold 13px/16px "DejaVu Sans Mono", monospace; color: #333; text-align: center; letter-spacing: .2px; }
.mini { position: absolute; right: 0; bottom: 0; width: 149px; height: 70px; border: 1px solid #c6c6c6; border-bottom: 0; background: #fff; }
.minibtn { position: absolute; right: 0; bottom: 0; width: 15px; height: 15px; background: #fff; border: 1px solid #888; }
.minibtn svg { width: 13px; height: 13px; }
.mapctl { position: absolute; left: 0; top: 1px; display: grid; grid-template-columns: 23px 23px 18px; grid-template-rows: 20px 20px 20px 17px 123px 19px 20px; justify-items: start; }
.mb { width: 17px; height: 17px; background: #fff; border: 1px solid #000; border-top-color: #ddd; border-left-color: #ddd; box-shadow: 0 0 0 1px rgba(255,255,255,.5); display: flex; align-items: center; justify-content: center; }
.mb svg { width: 14px; height: 14px; }
.mb-nw { margin-left: 2px; border: 1px solid #aaa; }
.zoomrail { width: 18px; height: 123px; background: #eaecee; position: relative; display: block; }
.ztrack { position: absolute; left: 0; top: 9px; width: 5px; height: 105px; background: #fff; border: 1px solid #7a8faa; display: block; }
.zfill { position: absolute; left: 0; right: 0; bottom: 0; height: 6px; background: #9ec0ea; display: block; }
.zthumb { position: absolute; left: 0; top: 93px; width: 11px; height: 16px; }
.zticks { position: absolute; right: 0; top: 9px; width: 4px; height: 106px; background: repeating-linear-gradient(#a8bcd4 0, #a8bcd4 1px, transparent 1px, transparent 7.800px); display: block; }
.tb { width: 21px; height: 20px; background: #888; border: 1px solid #555; border-top-color: #444; display: flex; align-items: center; justify-content: center; }
.tb svg { width: 15px; height: 15px; }
.tb-a { background: #777; border-color: #bbb; }

/* status bar */
.statusbar { height: 27px; flex: none; background: #dcdbd6; border-top: 2px solid #111; display: flex; flex-direction: column; }
.statusline { height: 20px; flex: none; display: flex; align-items: center; font: 12.500px "DejaVu Sans", sans-serif; color: #222; border-bottom: 1px solid #333; border-left: 1px solid #333; padding: 0 0 2px 7px; }
.done { flex: 1; }
.st-ic { width: 20px; height: 20px; border-left: 1px solid #222; border-right: 1px solid #aaa; display: flex; align-items: center; justify-content: center; margin-bottom: -2px; }
.st-ic svg { width: 15px; height: 15px; }
.st-bug svg { width: 18px; height: 16px; }
.grip { width: 26px; height: 20px; margin-bottom: -2px; background: repeating-linear-gradient(135deg, transparent 0 3px, #999 3px 4px); }
.taskstrip { flex: 1; background: #dcdbd6; }
```
